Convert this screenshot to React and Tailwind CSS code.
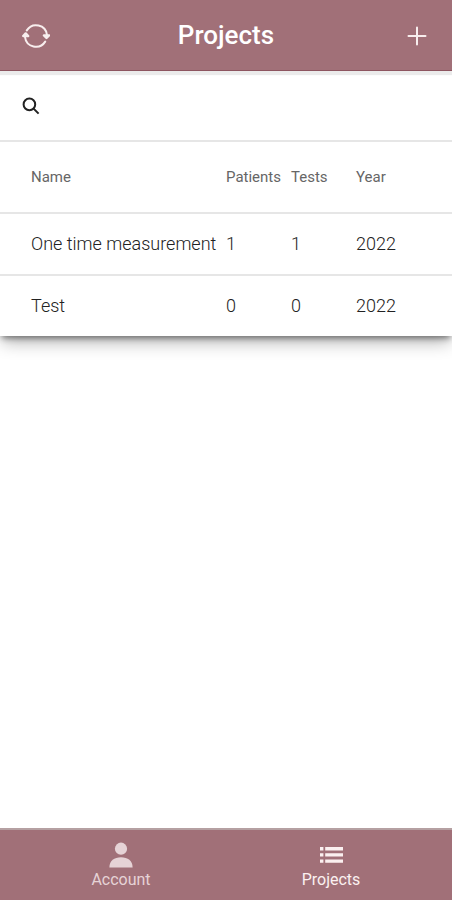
import React, { useState } from 'react';

const projects = [
  { id: 1, name: 'One time measurement', patients: 1, tests: 1, year: 2022 },
  { id: 2, name: 'Test', patients: 0, tests: 0, year: 2022 },
];

function SyncIcon({ className }) {
  return (
    <svg viewBox="0 0 28 26" className={className} fill="none" stroke="currentColor" strokeWidth="2" strokeLinecap="round" aria-hidden="true">
      <path d="M4.8 7.4A11 11 0 0 1 25 12" />
      <path d="M23.2 18.6A11 11 0 0 1 3 14" />
      <path d="M22 12.4h5l-2.5 2.6z" fill="currentColor" strokeWidth="2.4" strokeLinejoin="round" />
      <path d="M1.2 13h5l-2.5-2.6z" fill="currentColor" strokeWidth="2.4" strokeLinejoin="round" />
    </svg>
  );
}

function PlusIcon({ className }) {
  return (
    <svg viewBox="0 0 20 20" className={className} fill="none" stroke="currentColor" strokeWidth="2" strokeLinecap="round" aria-hidden="true">
      <path d="M10 1.5v17M1.5 10h17" />
    </svg>
  );
}

function SearchIcon({ className }) {
  return (
    <svg viewBox="0 0 18 18" className={className} fill="none" stroke="currentColor" strokeWidth="2" aria-hidden="true">
      <circle cx="7.4" cy="7.4" r="5.8" />
      <path d="M11.6 11.6l5 5" />
    </svg>
  );
}

function PersonIcon({ className }) {
  return (
    <svg viewBox="0 0 24 26" className={className} fill="currentColor" aria-hidden="true">
      <circle cx="12" cy="6.7" r="6.1" />
      <path d="M0.4 25.4c0-6.6 4.8-10.2 11.6-10.2s11.6 3.6 11.6 10.2z" />
    </svg>
  );
}

function ListIcon({ className }) {
  return (
    <svg viewBox="0 0 24 26" className={className} fill="currentColor" aria-hidden="true">
      <path d="M1 5h3.4v3.4H1zM6.2 5H24v3.4H6.2z" />
      <path d="M1 11.2h3.4v3.4H1zM6.2 11.2H24v3.4H6.2z" />
      <path d="M1 17.4h3.4v3.4H1zM6.2 17.4H24v3.4H6.2z" />
    </svg>
  );
}

function ProjectRow({ project }) {
  return (
    <tr className="grid grid-cols-6 items-center h-[60px] px-[31px] box-content border-t-2 border-[#e6e6e6] text-lg font-light text-[#222222]">
      <td className="col-span-3 whitespace-nowrap">{project.name}</td>
      <td>{project.patients}</td>
      <td>{project.tests}</td>
      <td>{project.year}</td>
    </tr>
  );
}

export default function App() {
  const [query, setQuery] = useState('');
  const visible = projects.filter(p => p.name.toLowerCase().includes(query.toLowerCase()));

  return (
    <div className="min-h-screen flex flex-col bg-white font-[Roboto,sans-serif]">
      <header className="relative z-10 flex items-center justify-between h-[71px] px-[22px] pt-px bg-[#a17078] border-b border-[#8d5560] text-[#f8eeee] shadow-[0_4px_1px_#ebebeb]">
        <button type="button" aria-label="Refresh" className="w-7">
          <SyncIcon className="w-7 h-[26px]" />
        </button>
        <h1 className="text-[26px] font-medium text-white">Projects</h1>
        <button type="button" aria-label="Add project" className="w-7 flex justify-end">
          <PlusIcon className="w-5 h-5 mr-[3px]" />
        </button>
      </header>

      <main className="flex-1">
        <section className="bg-white shadow-[0_8px_16px_-2px_rgba(0,0,0,0.3),0_4px_6px_-2px_rgba(0,0,0,0.45)]">
          <label className="flex items-center gap-3 h-[69px] px-[22px]">
            <SearchIcon className="w-[18px] h-[18px] text-[#222222]" />
            <input
              type="text"
              aria-label="Search projects"
              value={query}
              onChange={e => setQuery(e.target.value)}
              className="flex-1 min-w-0 text-lg outline-none"
            />
          </label>

          <table className="block w-full text-left">
            <thead className="block">
              <tr className="grid grid-cols-6 items-center h-[70px] px-[31px] box-content border-t-2 border-[#e6e6e6] text-[15px] text-[#666666]">
                <th className="col-span-3 font-normal">Name</th>
                <th className="font-normal">Patients</th>
                <th className="font-normal">Tests</th>
                <th className="font-normal">Year</th>
              </tr>
            </thead>
            <tbody className="block">
              {visible.map(project => (
                <ProjectRow key={project.id} project={project} />
              ))}
            </tbody>
          </table>
        </section>
      </main>

      <nav className="flex h-[72px] px-4 pt-1 bg-[#a17078] border-t-2 border-[#b5a0a2] text-base">
        <a href="#account" className="flex-1 flex flex-col items-center justify-center text-[#e6d3d6]">
          <PersonIcon className="w-6 h-[26px]" />
          Account
        </a>
        <a href="#projects" aria-current="page" className="flex-1 flex flex-col items-center justify-center text-[#fbf0f0]">
          <ListIcon className="w-6 h-[26px]" />
          Projects
        </a>
      </nav>
    </div>
  );
}
